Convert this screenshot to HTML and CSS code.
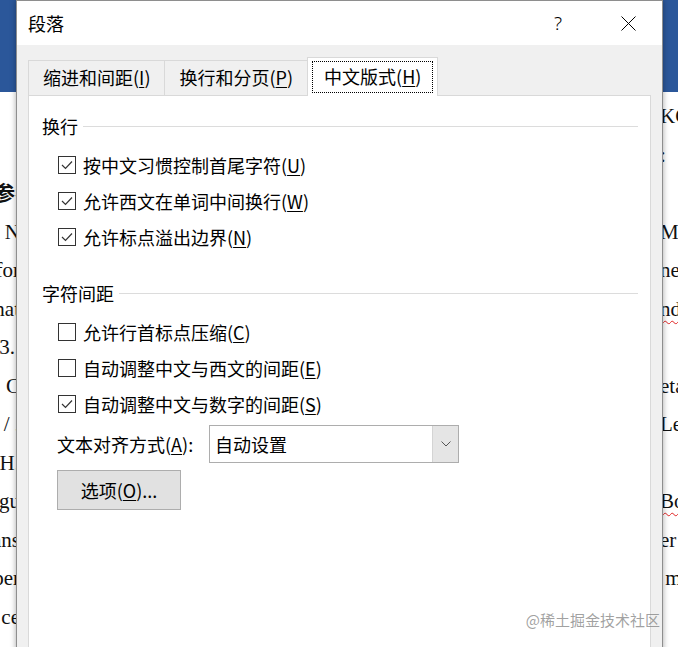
FILE: index.html
```html
<!DOCTYPE html>
<html lang="zh-CN">
<head>
<meta charset="utf-8">
<title>段落</title>
<link rel="stylesheet" href="styles.css">
</head>
<body>
<div class="desk">
  <div class="strip strip-left">
    <div class="ribbon"></div>
    <div class="page page-left">
      <div class="line"><span>&nbsp;</span></div>
      <div class="line"><span>&nbsp;</span></div>
      <div class="line"><span class="cjk-bold">参考</span></div>
      <div class="line"><span>N</span></div>
      <div class="line"><span>for</span></div>
      <div class="line"><span>nat</span></div>
      <div class="line"><span class="flush">3.</span></div>
      <div class="line"><span>C</span></div>
      <div class="line"><span>/ .</span></div>
      <div class="line"><span>H.</span></div>
      <div class="line"><span>gu</span></div>
      <div class="line"><span>ans</span></div>
      <div class="line"><span>per</span></div>
      <div class="line"><span>ce</span></div>
    </div>
  </div>

  <div class="dialog">
    <div class="titlebar">
      <span class="title">段落</span>
      <span class="help">?</span>
      <span class="close">
        <svg width="15" height="15" viewBox="0 0 15 15"><path d="M0.5 0.5 L14.5 14.5 M14.5 0.5 L0.5 14.5" stroke="#000" stroke-width="1" fill="none"/></svg>
      </span>
    </div>
    <div class="dlg-body">
      <div class="tabs">
        <div class="tab">缩进和间距(<u>I</u>)</div>
        <div class="tab">换行和分页(<u>P</u>)</div>
        <div class="tab active"><span class="focus">中文版式(<u>H</u>)</span></div>
      </div>
      <div class="panel">
        <div class="group-head"><span>换行</span><i class="rule"></i></div>
        <div class="opts">
          <div class="opt"><span class="cb"><svg width="16" height="16" viewBox="0 0 16 16"><polyline points="3,8 6.5,11.5 13,4.5" fill="none" stroke="#333" stroke-width="1.2"/></svg></span><span>按中文习惯控制首尾字符(<u>U</u>)</span></div>
          <div class="opt"><span class="cb"><svg width="16" height="16" viewBox="0 0 16 16"><polyline points="3,8 6.5,11.5 13,4.5" fill="none" stroke="#333" stroke-width="1.2"/></svg></span><span>允许西文在单词中间换行(<u>W</u>)</span></div>
          <div class="opt"><span class="cb"><svg width="16" height="16" viewBox="0 0 16 16"><polyline points="3,8 6.5,11.5 13,4.5" fill="none" stroke="#333" stroke-width="1.2"/></svg></span><span>允许标点溢出边界(<u>N</u>)</span></div>
        </div>
        <div class="group-head second"><span>字符间距</span><i class="rule"></i></div>
        <div class="opts">
          <div class="opt"><span class="cb"></span><span>允许行首标点压缩(<u>C</u>)</span></div>
          <div class="opt"><span class="cb"></span><span>自动调整中文与西文的间距(<u>E</u>)</span></div>
          <div class="opt"><span class="cb"><svg width="16" height="16" viewBox="0 0 16 16"><polyline points="3,8 6.5,11.5 13,4.5" fill="none" stroke="#333" stroke-width="1.2"/></svg></span><span>自动调整中文与数字的间距(<u>S</u>)</span></div>
        </div>
        <div class="align-row">
          <span class="align-label">文本对齐方式(<u>A</u>):</span>
          <div class="combo">
            <span class="combo-value">自动设置</span>
            <span class="combo-btn"><svg width="10" height="6" viewBox="0 0 10 6"><polyline points="0.5,0.5 5,5 9.5,0.5" fill="none" stroke="#555" stroke-width="1"/></svg></span>
          </div>
        </div>
        <div class="btn-row"><div class="btn">选项(<u>O</u>)...</div></div>
      </div>
    </div>
  </div>

  <div class="strip strip-right">
    <div class="ribbon"></div>
    <div class="page page-right">
      <div class="line">KC</div>
      <div class="line">:</div>
      <div class="line">&nbsp;</div>
      <div class="line">M,</div>
      <div class="line">ne</div>
      <div class="line"><span class="wavy">nd</span></div>
      <div class="line">&nbsp;</div>
      <div class="line">eta</div>
      <div class="line">Le</div>
      <div class="line">&nbsp;</div>
      <div class="line"><span class="wavy">Bo</span></div>
      <div class="line">er</div>
      <div class="line">&nbsp;m</div>
      <div class="line">&nbsp;</div>
    </div>
  </div>

  <div class="watermark">@稀土掘金技术社区</div>
</div>
</body>
</html>
```

FILE: styles.css
```css
* { box-sizing: border-box; }
html, body { margin: 0; padding: 0; }
body {
  width: 678px;
  height: 647px;
  overflow: hidden;
  font-family: "Noto Sans CJK SC", "Noto Sans", sans-serif;
  color: #000;
}
.desk {
  display: flex;
  width: 678px;
  height: 647px;
  overflow: hidden;
  position: relative;
  background: #fff;
}
.strip {
  display: flex;
  flex-direction: column;
  overflow: hidden;
}
.strip-left { width: 16px; flex: none; }
.strip-right { flex: 1; min-width: 0; }
.ribbon { height: 92px; flex: none; background: #2b579a; }
.page {
  background: #fff;
  padding-top: 5px;
  font-family: "Liberation Serif", serif;
  font-size: 21px;
  color: #111;
}
.line {
  height: 38.5px;
  line-height: 38.5px;
  white-space: nowrap;
  overflow: hidden;
}
.page-left .line { display: flex; justify-content: flex-end; }
.page-left .line span { flex: none; margin-right: -4px; }
.page-left .line span.flush { margin-right: 1px; }
.page-left .line span.cjk-bold { margin-right: -19px; }
.page-right .line { text-indent: -3px; }
.cjk-bold { font-family: "Noto Sans CJK SC", sans-serif; font-weight: 700; font-size: 20px; }
.wavy {
  text-decoration: underline wavy #e02424;
  text-decoration-thickness: 1px;
  text-underline-offset: 4px;
}

.dialog {
  width: 647px;
  flex: none;
  height: 670px;
  display: flex;
  flex-direction: column;
  border: 1px solid #8e8e8e;
  border-bottom: none;
  background: #f0f0f0;
  position: relative;
  z-index: 1;
  box-shadow: 0 0 6px rgba(0, 0, 0, 0.35);
}
.titlebar {
  height: 44px;
  flex: none;
  background: #fff;
  display: flex;
  align-items: center;
  padding: 0 11px;
}
.title { flex: 1; font-size: 18px; line-height: 24px; }
.help {
  width: 46px;
  text-align: center;
  font-family: "Noto Sans", sans-serif;
  font-weight: 300;
  font-size: 19px;
  line-height: 24px;
}
.close { width: 46px; margin-left: 24px; display: flex; justify-content: center; }

.dlg-body {
  flex: 1;
  display: flex;
  flex-direction: column;
  padding: 12px 11px 0;
}
.tabs {
  display: flex;
  align-items: flex-end;
  height: 38px;
  flex: none;
  position: relative;
  z-index: 1;
}
.tab {
  height: 35px;
  padding: 0 14px;
  border: 1px solid #d9d9d9;
  border-bottom: none;
  margin-right: -1px;
  font-size: 18px;
  line-height: 33px;
  background: #f0f0f0;
  white-space: nowrap;
}
.tab.active {
  height: 39px;
  margin-bottom: -1px;
  padding: 3px 4px 0;
  background: #fff;
}
.focus {
  display: block;
  height: 32px;
  line-height: 29px;
  padding: 0 11px;
  border: 1px dotted #000;
}
u { text-decoration: underline; text-underline-offset: 2px; text-decoration-thickness: 1px; }

.panel {
  flex: 1;
  background: #fff;
  border: 1px solid #d9d9d9;
  border-bottom: none;
  padding: 18px 12px 0 13px;
}
.group-head {
  display: flex;
  align-items: center;
  height: 24px;
  font-size: 18px;
  line-height: 24px;
}
.group-head.second { margin-top: 26px; }
.rule { flex: 1; height: 1px; background: #dcdcdc; margin-left: 5px; }
.opts { margin-top: 9px; padding-left: 16px; }
.opt {
  display: flex;
  align-items: center;
  height: 36px;
  font-size: 18px;
  line-height: 24px;
  white-space: nowrap;
}
.cb {
  width: 18px;
  height: 18px;
  flex: none;
  border: 1px solid #333;
  background: #fff;
  margin-right: 7px;
  display: flex;
}
.align-row {
  display: flex;
  align-items: center;
  height: 38px;
  margin-top: 3px;
  padding-left: 15px;
  font-size: 18px;
}
.align-label { width: 152px; flex: none; white-space: nowrap; }
.combo {
  width: 250px;
  height: 38px;
  display: flex;
  border: 1px solid #adadad;
  background: #fff;
}
.combo-value { flex: 1; padding-left: 5px; line-height: 36px; }
.combo-btn {
  width: 26px;
  background: #e5e5e5;
  border-left: 1px solid #d4d4d4;
  display: flex;
  align-items: center;
  justify-content: center;
}
.btn-row { margin-top: 7px; padding-left: 15px; }
.btn {
  width: 124px;
  height: 40px;
  border: 1px solid #adadad;
  background: #e1e1e1;
  font-size: 18px;
  line-height: 38px;
  text-align: center;
}

.watermark {
  position: absolute;
  right: 18px;
  bottom: 17px;
  z-index: 2;
  font-family: "Noto Sans CJK SC", sans-serif;
  font-size: 15px;
  line-height: 20px;
  color: rgba(130, 130, 130, 0.75);
}
```
